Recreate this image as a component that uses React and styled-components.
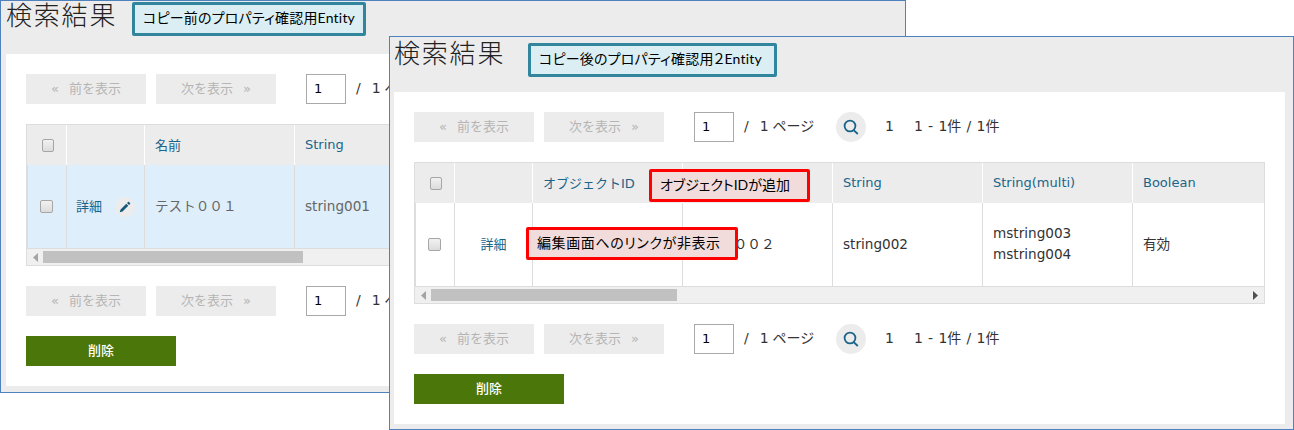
import React from 'react';
import styled, { createGlobalStyle } from 'styled-components';

const GlobalStyle = createGlobalStyle`
  * { box-sizing: border-box; }
  body {
    margin: 0;
    background: #fff;
    color: #333;
    font-family: "DejaVu Sans", "Noto Sans CJK JP", sans-serif;
    font-size: 13px;
    overflow: hidden;
  }
`;

const Desktop = styled.main`
  position: relative;
  width: 1294px;
  height: 430px;
  overflow: hidden;
`;

const Window = styled.section`
  position: absolute;
  left: ${(p) => p.$x}px;
  top: ${(p) => p.$y}px;
  width: ${(p) => p.$w}px;
  height: ${(p) => p.$h}px;
  padding: 0 8px ${(p) => p.$bottom}px ${(p) => p.$side}px;
  display: flex;
  flex-direction: column;
  background: #ececec;
  border: 1px solid #4f81bd;
`;

const Title = styled.h1`
  margin: 0;
  flex: none;
  height: ${(p) => p.$h}px;
  padding-top: ${(p) => p.$top}px;
  font: 300 26px/26px "Noto Sans CJK JP", sans-serif;
  letter-spacing: 1.8px;
  color: #222;
`;

const Panel = styled.div`
  flex: 1;
  min-height: 0;
  padding: 20px;
  display: flex;
  flex-direction: column;
  gap: 20px;
  background: #fff;
`;

const Pager = styled.nav`
  display: flex;
  height: 30px;
  flex: none;
  line-height: 29px;
  white-space: nowrap;
`;

const PageButton = styled.button`
  width: 120px;
  height: 30px;
  margin: 0 10px 0 0;
  padding: 0 0 1px;
  border: 0;
  display: flex;
  align-items: center;
  justify-content: center;
  gap: 10px;
  background: #ececec;
  color: #b5b5b5;
  font: 13px/28px "DejaVu Sans", "Noto Sans CJK JP", sans-serif;
`;

const PageInput = styled.input`
  width: 40px;
  height: 30px;
  margin-left: 20px;
  padding: 0 6px 2px 7px;
  border: 1px solid #a9a9a9;
  border-radius: 0;
  background: #fff;
  color: #000;
  font: 13px "DejaVu Sans", sans-serif;
`;

const PageTotal = styled.span`
  width: 102px;
  padding-left: 10px;
  display: flex;
  gap: 11px;
  font-size: 14px;
  word-spacing: -0.5px;
`;

const SearchButton = styled.button`
  width: 30px;
  height: 30px;
  padding: 0;
  border: 0;
  border-radius: 50%;
  display: flex;
  align-items: center;
  justify-content: center;
  background: #ececec;
  color: #1b6489;
`;

const Counter = styled.span`
  padding-left: 19px;
  display: flex;
  gap: 20px;
  font-size: 14px;
  word-spacing: 0.8px;
`;

const TableBox = styled.div`
  flex: none;
  height: 142px;
  border: 1px solid #ddd;
  overflow: hidden;
`;

const Row = styled.div`
  display: grid;
  grid-template-columns: 40px 78px repeat(4, 150px);
`;

const HeadRow = styled(Row)`
  height: 40px;
  background: #ececec;
  color: #1b6489;
  font-size: 13px;
`;

const BodyRow = styled(Row)`
  height: 84px;
  border-left: 1px solid #ddd;
  border-bottom: 1px solid #ddd;
  grid-template-columns: 39px 78px repeat(4, 150px);
  background: ${(p) => (p.$selected ? '#dfeefb' : '#fff')};
  color: ${(p) => (p.$selected ? '#666' : '#333')};
  font-size: 13.6px;
`;

const HeadCell = styled.div`
  display: flex;
  align-items: center;
  justify-content: ${(p) => (p.$center ? 'center' : 'flex-start')};
  padding: ${(p) => (p.$center ? '0 0 0 3px' : '0 0 1px 10px')};
  border-right: 1px solid #fff;
  white-space: nowrap;
`;

const Cell = styled.div`
  display: flex;
  flex-direction: ${(p) => (p.$lines ? 'column' : 'row')};
  align-items: ${(p) => (p.$lines ? 'flex-start' : 'center')};
  justify-content: ${(p) => (p.$center || p.$lines ? 'center' : 'flex-start')};
  padding: 0 0 1px ${(p) => (p.$center ? 0 : 10)}px;
  gap: ${(p) => (p.$center ? 13 : 0)}px;
  border-right: 1px solid #ddd;
  line-height: 21px;
  white-space: nowrap;
`;

const CheckCell = styled(Cell)`
  padding: 0 2px 2px 0;
`;

const DetailLink = styled.a`
  color: #1b6489;
  font-size: 13px;
`;

const EditBadge = styled.span`
  width: 20px;
  height: 20px;
  margin-top: 2px;
  border-radius: 50%;
  display: flex;
  align-items: center;
  justify-content: center;
  background: #ececec;
  color: #15587c;
`;

const Checkbox = styled.span`
  width: ${(p) => (p.$small ? 12 : 13)}px;
  height: 13px;
  margin-top: 1px;
  border: 1px solid #a6a6a6;
  border-radius: 2px;
  background: linear-gradient(#f1f1f1, #dcdcdc);
`;

const ScrollBar = styled.div`
  height: 16px;
  padding: 0 6px;
  display: flex;
  align-items: center;
  background: #f0f0f0;
`;

const Thumb = styled.div`
  width: ${(p) => p.$w}px;
  height: 12px;
  margin: 0 auto 0 5px;
  background: #c1c1c1;
`;

const DeleteButton = styled.button`
  width: 150px;
  height: 30px;
  padding: 0 0 2px;
  border: 0;
  flex: none;
  background: #4b7609;
  color: #fff;
  font: 500 13px/28px "Noto Sans CJK JP", sans-serif;
`;

const Callout = styled.div`
  position: absolute;
  left: ${(p) => p.$x}px;
  top: ${(p) => p.$y}px;
  width: ${(p) => p.$w}px;
  height: ${(p) => p.$h}px;
  padding-left: 8px;
  border: 3px solid ${(p) => (p.$warn ? '#f00' : '#31859c')};
  border-radius: 2px;
  background: ${(p) => (p.$warn ? '#f2dcdb' : '#daeef3')};
  color: #000;
  font: 14px/${(p) => p.$h - 8}px Lato, "Noto Sans CJK JP", sans-serif;
  font-feature-settings: "palt";
  letter-spacing: ${(p) => p.$spacing || 0}px;
  white-space: nowrap;
`;

const SearchIcon = () => (
  <svg width="16" height="16" viewBox="0 0 16 16" fill="none" stroke="currentColor" strokeWidth="1.8">
    <circle cx="7" cy="7" r="5.4" />
    <path d="M10.4 10.8 14.8 15" />
  </svg>
);

const PencilIcon = () => (
  <svg width="12" height="12" viewBox="0 0 12 12" fill="currentColor">
    <path d="M.8 11.2 1.5 8.5 7.3 2.7 9.3 4.7 3.5 10.5ZM8 2 9.1.9Q9.6.6 10.1 1L11 1.9Q11.4 2.4 11.1 2.9L10 4Z" />
  </svg>
);

const Arrow = ({ right }) => (
  <svg width="5" height="9" viewBox="0 0 5 9" fill={right ? '#505050' : '#a3a3a3'}>
    <path d={right ? 'M0 0 5 4.5 0 9Z' : 'M5 0 0 4.5 5 9Z'} />
  </svg>
);

const ResultPager = () => (
  <Pager>
    <PageButton><span>«</span><span>前を表示</span></PageButton>
    <PageButton><span>次を表示</span><span>»</span></PageButton>
    <PageInput defaultValue="1" />
    <PageTotal><span>/</span><span>1 ページ</span></PageTotal>
    <SearchButton><SearchIcon /></SearchButton>
    <Counter><span>1</span><span>1 - 1件 / 1件</span></Counter>
  </Pager>
);

const ResultTable = ({ columns, values, selected, editable, thumb }) => (
  <TableBox>
    <HeadRow>
      <HeadCell $center><Checkbox $small /></HeadCell>
      <HeadCell />
      {columns.map((name) => <HeadCell key={name}>{name}</HeadCell>)}
    </HeadRow>
    <BodyRow $selected={selected}>
      <CheckCell $center><Checkbox /></CheckCell>
      <Cell $center>
        <DetailLink>詳細</DetailLink>
        {editable && <EditBadge><PencilIcon /></EditBadge>}
      </Cell>
      {values.map((value, i) => (
        <Cell key={i} $lines={Array.isArray(value)}>
          {Array.isArray(value) ? value.map((line) => <span key={line}>{line}</span>) : value}
        </Cell>
      ))}
    </BodyRow>
    <ScrollBar><Arrow /><Thumb $w={thumb} /><Arrow right /></ScrollBar>
  </TableBox>
);

const WideTable = styled.div`
  display: contents;
  ${Row} { grid-template-columns: 40px 78px repeat(4, 150px) 131px; }
  ${BodyRow} { grid-template-columns: 39px 78px repeat(4, 150px) 131px; }
  ${HeadCell}:last-child, ${Cell}:last-child { border-right: 0; }
`;

export default function App() {
  return (
    <>
      <GlobalStyle />
      <Desktop>
        <Window $x={0} $y={0} $w={906} $h={393} $side={5} $bottom={6}>
          <Title $h={53} $top={0}>検索結果</Title>
          <Panel>
            <ResultPager />
            <ResultTable columns={['名前', 'String']} values={['テスト００１', 'string001']} thumb={260} selected editable />
            <ResultPager />
            <DeleteButton>削除</DeleteButton>
          </Panel>
        </Window>
        <Callout $x={132} $y={2} $w={234} $h={34} $spacing={0.2}>コピー前のプロパティ確認用Entity</Callout>

        <Window $x={389} $y={36} $w={905} $h={394} $side={4} $bottom={5}>
          <Title $h={55} $top={2}>検索結果</Title>
          <Panel>
            <ResultPager />
            <WideTable>
              <ResultTable
                columns={['オブジェクトID', '名前', 'String', 'String(multi)', 'Boolean']}
                values={['', 'テスト００２', 'string002', ['mstring003', 'mstring004'], '有効']}
                thumb={246}
              />
            </WideTable>
            <ResultPager />
            <DeleteButton>削除</DeleteButton>
          </Panel>
        </Window>
        <Callout $x={528} $y={43} $w={249} $h={34} $spacing={0.2}>コピー後のプロパティ確認用２Entity</Callout>
        <Callout $warn $x={649} $y={169} $w={161} $h={33}>オブジェクトIDが追加</Callout>
        <Callout $warn $x={526} $y={227} $w={212} $h={33} $spacing={0.6}>編集画面へのリンクが非表示</Callout>
      </Desktop>
    </>
  );
}
